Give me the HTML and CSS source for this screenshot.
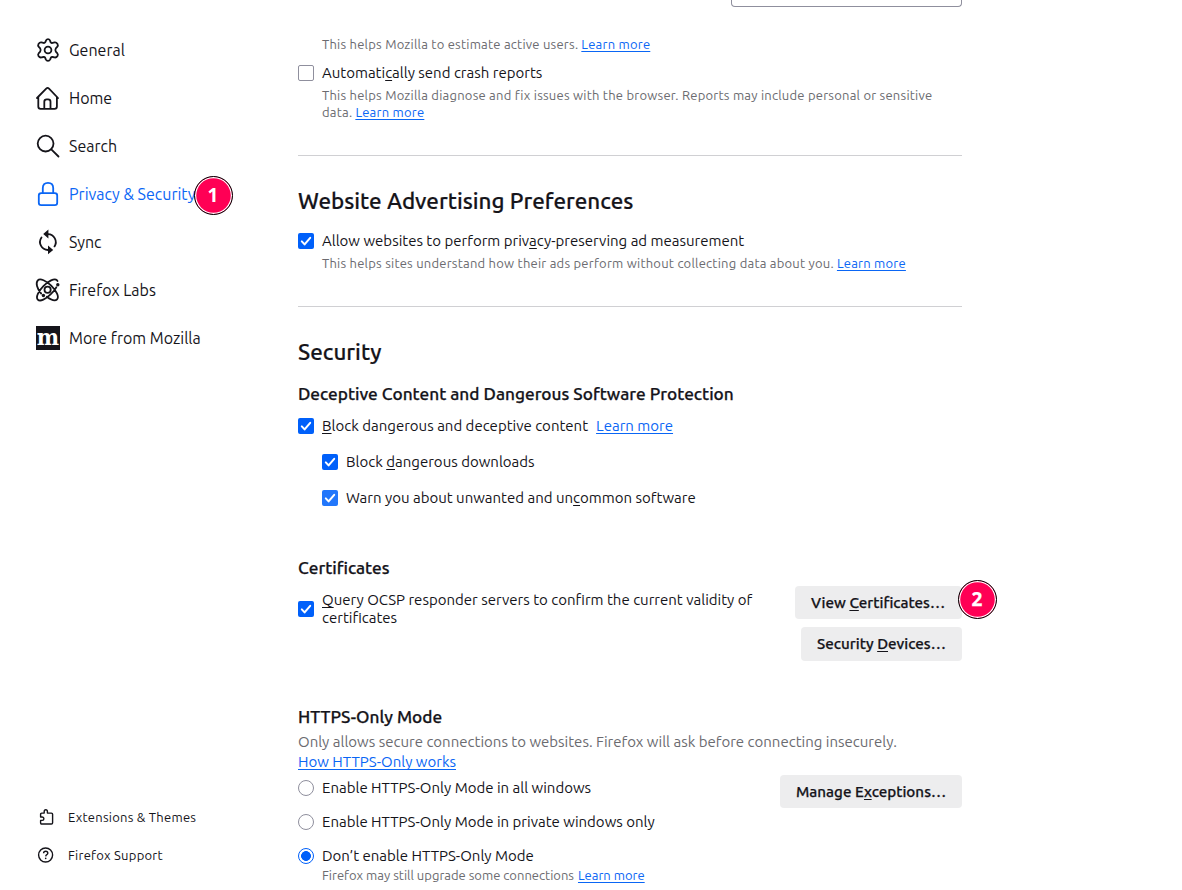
FILE: index.html
```html
<!DOCTYPE html>
<html lang="en">
<head>
<meta charset="utf-8">
<title>Settings</title>
<link rel="stylesheet" href="styles.css">
</head>
<body>
<div class="page">
  <aside class="sidebar">
    <nav class="nav">
      <a class="nav-item"><svg class="nav-icon" viewBox="0 0 24 24"><path d="M9.8 3.1Q10.2 1.2 12 1.2T14.2 3.1L14.7 4.4Q15.5 5.2 16.6 4.9L18.6 4.4Q20.3 4.1 21.5 5.9Q22.4 7.6 21.2 8.8L19.8 10.3Q18.9 12 19.8 13.6L21.2 15.1Q22.4 16.4 21.5 18Q20.3 19.8 18.5 19.4L16.6 19Q15.4 18.8 14.8 19.8L14.2 21.3Q13.5 22.8 12 22.8T9.8 21.3L9.2 19.8Q8.6 18.8 7.4 19L5.5 19.4Q3.7 19.8 2.5 18Q1.6 16.4 2.8 15.1L4.2 13.6Q5.1 12 4.2 10.3L2.8 8.8Q1.6 7.6 2.5 5.9Q3.7 4.1 5.4 4.4L7.4 4.9Q8.6 5.2 9.2 4.3Z"/><circle cx="12" cy="12" r="3.4"/></svg><span>General</span></a>
      <a class="nav-item"><svg class="nav-icon" viewBox="0 0 24 24"><path d="M1 12 10.2 2.6Q11.6 1.2 13 2.6L22 12M2.3 11V20.5Q2.3 22.8 4.6 22.8H18.6Q20.9 22.8 20.9 20.5V11M8.3 22.5V15.8Q8.3 13.4 10.7 13.4H12.1Q14.5 13.4 14.5 15.8V22.5"/></svg><span>Home</span></a>
      <a class="nav-item"><svg class="nav-icon" viewBox="0 0 24 24"><circle cx="9.6" cy="9.6" r="7.9"/><path d="m15.3 15.3 7.2 7.2"/></svg><span>Search</span></a>
      <a class="nav-item selected"><svg class="nav-icon" viewBox="0 0 24 24"><rect x="2.8" y="11.2" width="18.4" height="12" rx="2.4"/><path d="M6.8 11V6Q6.8.8 12 .8T17.2 6V11"/></svg><span>Privacy &amp; Security</span><span class="marker marker-one">1</span></a>
      <a class="nav-item"><svg class="nav-icon" viewBox="0 0 24 24"><path d="M10 4.1H12A8 8 0 0 1 18.5 16.4M5.5 7.4A8 8 0 0 0 12 20H14"/><path class="solid" d="M12.4-.4V8.4L7.2 4ZM12 15.6V24.2L17.2 20Z"/></svg><span>Sync</span></a>
      <a class="nav-item"><svg class="nav-icon" viewBox="0 0 24 24"><circle cx="11.6" cy="11.8" r="3.1"/><path d="M20.3 9.3Q18.5 12.8 14.8 16.2C9.8 21.2 4.1 24 1.8 21.6C-.5 19.3 2.4 13.2 7.4 8.2C12.4 3.2 18.4-.2 20.9 2.2L21.5 3M5.2 15.6C.9 10.6-.5 4.7 1.8 2.3C4.2-.1 10.2 2.7 15.2 7.7C20.2 12.7 23.5 18.9 21.1 21.3C18.8 23.7 14.8 21.8 10.8 18.8"/><circle class="solid" cx="21.8" cy="6.8" r="1.7"/><circle class="solid" cx="7.4" cy="17.5" r="1.7"/></svg><span>Firefox Labs</span></a>
      <a class="nav-item"><svg class="nav-icon" viewBox="0 0 24 24"><rect class="tile" width="24" height="24"/><text class="tile-letter" transform="translate(12 18.6) scale(.96 1.04)">m</text></svg><span>More from Mozilla</span></a>
    </nav>
    <nav class="footer-nav">
      <a class="footer-item"><svg class="footer-icon" viewBox="0 0 16 16"><path d="M2.6 6.9V5.2Q2.6 4.1 3.7 4.1H6.2V2.6Q6.2.8 7.8.8T9.4 2.6V4.1H13.4Q14.6 4.1 14.6 5.2V13.8Q14.6 15 13.4 15H3.7Q2.6 15 2.6 13.8V11.4H4.2Q5.9 11.2 5.9 9.7T4.2 8H2.6Z"/></svg><span>Extensions &amp; Themes</span></a>
      <a class="footer-item"><svg class="footer-icon" viewBox="0 0 16 16"><circle cx="7.6" cy="8" r="7"/><path d="M5.6 6.2Q5.6 4.3 7.7 4.3T9.8 6.2Q9.8 7 8.8 7.6T7.7 9.4"/><circle class="solid" cx="7.7" cy="11.4" r=".8"/></svg><span>Firefox Support</span></a>
    </nav>
  </aside>

  <main class="content">
    <div class="select-edge"></div>
    <p class="note note-users"><span>This helps Mozilla to estimate active users.</span><a class="link">Learn more</a></p>
    <label class="option"><span class="check"></span><span>Automati<u>c</u>ally send crash reports</span></label>
    <p class="note note-crash"><span>This helps Mozilla diagnose and fix issues with the browser. Reports may include personal or sensitive</span></p>
    <p class="note"><span>data.</span><a class="link">Learn more</a></p>

    <section class="section">
      <h1>Website Advertising Preferences</h1>
      <label class="option option-ads"><span class="check on"><svg viewBox="0 0 16 16"><path d="m3.8 8.4 2.8 3 5.6-6.6"/></svg></span><span>Allow websites to perform priv<u>a</u>cy-preserving ad measurement</span></label>
      <p class="note note-ads"><span>This helps sites understand how their ads perform without collecting data about you.</span><a class="link">Learn more</a></p>
    </section>

    <section class="section">
      <h1>Security</h1>
      <h2 class="h-deceptive">Deceptive Content and Dangerous Software Protection</h2>
      <label class="option option-block"><span class="check on"><svg viewBox="0 0 16 16"><path d="m3.8 8.4 2.8 3 5.6-6.6"/></svg></span><span><u>B</u>lock dangerous and deceptive content</span><a class="link">Learn more</a></label>
      <label class="option nested"><span class="check on"><svg viewBox="0 0 16 16"><path d="m3.8 8.4 2.8 3 5.6-6.6"/></svg></span><span>Block <u>d</u>angerous downloads</span></label>
      <label class="option nested"><span class="check on soft"><svg viewBox="0 0 16 16"><path d="m3.8 8.4 2.8 3 5.6-6.6"/></svg></span><span>Warn you about unwanted and un<u>c</u>ommon software</span></label>

      <h2 class="h-cert">Certificates</h2>
      <div class="split split-cert">
        <label class="option tall"><span class="check on"><svg viewBox="0 0 16 16"><path d="m3.8 8.4 2.8 3 5.6-6.6"/></svg></span><span><u>Q</u>uery OCSP responder servers to confirm the current validity of<br>certificates</span></label>
        <div class="buttons">
          <button class="button view">View <u>C</u>ertificates…<span class="marker marker-two">2</span></button>
          <button class="button devices">Security <u>D</u>evices…</button>
        </div>
      </div>

      <h2 class="h-https">HTTPS-Only Mode</h2>
      <p class="lead">Only allows secure connections to websites. Firefox will ask before connecting insecurely.</p>
      <p class="lead"><a class="link">How HTTPS-Only works</a></p>
      <div class="split">
        <div class="radios">
          <label class="option"><span class="radio"></span><span>Enable HTTPS-Only Mode in all windows</span></label>
          <label class="option"><span class="radio"></span><span>Enable HTTPS-Only Mode in private windows only</span></label>
          <label class="option"><span class="radio on"></span><span>Don’t enable HTTPS-Only Mode</span></label>
        </div>
        <button class="button manage">Manage E<u>x</u>ceptions…</button>
      </div>
      <p class="note note-upgrade"><span>Firefox may still upgrade some connections</span><a class="link">Learn more</a></p>
    </section>
  </main>
</div>
</body>
</html>
```
FILE: styles.css
```css
* { box-sizing: border-box; }
body {
  margin: 0;
  height: 890px;
  overflow: hidden;
  background: #fff;
  color: #15141a;
  font-family: Ubuntu, "Noto Sans", "Open Sans", sans-serif;
  font-size: 15px;
}
h1, h2, p { margin: 0; white-space: nowrap; }
u { text-decoration-thickness: 1px; text-underline-offset: 2px; text-decoration-skip-ink: none; }
.page { display: flex; height: 890px; }

.sidebar {
  display: flex;
  flex-direction: column;
  justify-content: space-between;
  width: 298px;
  padding: 26px 0 16px 36px;
}
.nav-item {
  position: relative;
  display: flex;
  align-items: center;
  gap: 9px;
  width: 200px;
  height: 48px;
  font-size: 16px;
  white-space: nowrap;
}
.nav-item > span:not(.marker) { padding-bottom: 1px; }
.selected { color: #0a66f5; }
.nav-icon {
  width: 24px;
  height: 24px;
  overflow: visible;
  fill: none;
  stroke: currentColor;
  stroke-width: 1.8;
  stroke-linecap: round;
  stroke-linejoin: round;
}
.solid { fill: currentColor; stroke: none; }
.tile { fill: #15141a; stroke: none; }
.tile-letter {
  fill: #fff;
  stroke: none;
  font: bold 22px "DejaVu Serif", serif;
  text-anchor: middle;
}
.footer-item {
  display: flex;
  align-items: center;
  gap: 14px;
  height: 38px;
  padding-left: 2px;
  font-size: 13px;
  letter-spacing: 0.25px;
  white-space: nowrap;
}
.footer-icon {
  width: 16px;
  height: 16px;
  overflow: visible;
  fill: none;
  stroke: currentColor;
  stroke-width: 1.4;
  stroke-linejoin: round;
}

.marker {
  position: absolute;
  display: flex;
  align-items: center;
  justify-content: center;
  width: 39px;
  height: 39px;
  padding-bottom: 2px;
  border: 1px solid #000;
  border-radius: 50%;
  background: #ff0055;
  box-shadow: inset 0 0 0 1.2px #fff;
  color: #fff;
  font: bold 19px "Noto Sans", sans-serif;
}
.marker-one { left: 157.5px; top: 6.4px; }
.marker-two { left: 162.5px; top: -5.6px; }

.content { width: 664px; }
.select-edge {
  width: 231px;
  height: 7px;
  margin-left: auto;
  border: 1px solid #8f8f9d;
  border-top: 0;
  border-radius: 0 0 4px 4px;
}
.note {
  display: flex;
  gap: 3px;
  height: 17px;
  padding-left: 24px;
  color: #6b6b70;
  font-size: 13px;
  line-height: 17px;
  letter-spacing: 0.225px;
}
.note-users { margin: 29px 0 10px; }
.note-crash { margin-top: 4px; }
.note-ads { margin-top: 4px; }
.link {
  color: #0a66f5;
  text-decoration: underline 1px;
  text-underline-offset: 2px;
  text-decoration-skip-ink: none;
}
.section { border-top: 1px solid #d0d0d3; padding-top: 30px; margin-top: 34px; }
h1 { height: 30px; font-size: 22.4px; line-height: 30px; font-weight: 500; -webkit-text-stroke: 0.2px; }
h2 { height: 20px; font-size: 17.26px; line-height: 20px; font-weight: 500; -webkit-text-stroke: 0.25px; }
.h-deceptive { margin-top: 17px; }
.h-cert { margin-top: 50px; }
.h-https { margin-top: 46px; margin-bottom: 5px; }
.option { display: flex; align-items: center; gap: 8px; height: 20px; line-height: 18px; white-space: nowrap; }
.option-ads { margin-top: 15px; }
.option-block { margin-top: 12px; }
.nested { margin: 16px 0 0 24px; }
.tall { height: 36px; margin-top: 5px; }
.check, .radio { flex: none; width: 16px; height: 16px; border: 1px solid #8f8f9d; background: #fff; }
.check { border-radius: 2px; }
.check.on { border: 0; background: #0060fa; }
.check.on.soft { background: #2277fb; }
.check svg { display: block; fill: none; stroke: #fff; stroke-width: 2; stroke-linecap: round; stroke-linejoin: round; }
.radio { border-radius: 50%; }
.radio.on { border: 1.5px solid #0060fa; background: radial-gradient(circle, #0060fa 4.6px, #fff 5.2px); }

.split { display: flex; justify-content: space-between; align-items: flex-start; }
.split-cert { margin-top: 8px; height: 75px; }
.buttons { display: flex; flex-direction: column; align-items: flex-end; gap: 8px; }
.button {
  position: relative;
  height: 33px;
  padding: 0 0 0 16px;
  border: 0;
  border-radius: 4px;
  background: #ededee;
  color: #15141a;
  font: 500 15.2px/20px Ubuntu, "Noto Sans", "Open Sans", sans-serif;
  -webkit-text-stroke: 0.25px;
  text-align: left;
  white-space: nowrap;
}
.view { width: 167px; }
.devices { width: 161px; height: 34px; }
.manage { width: 182px; margin-top: 3px; }
.lead { height: 20px; color: #6b6b70; line-height: 20px; }
.radios { display: flex; flex-direction: column; gap: 14px; padding-top: 6px; }
.note-upgrade { gap: 4px; margin-top: 1px; letter-spacing: 0; }
```
